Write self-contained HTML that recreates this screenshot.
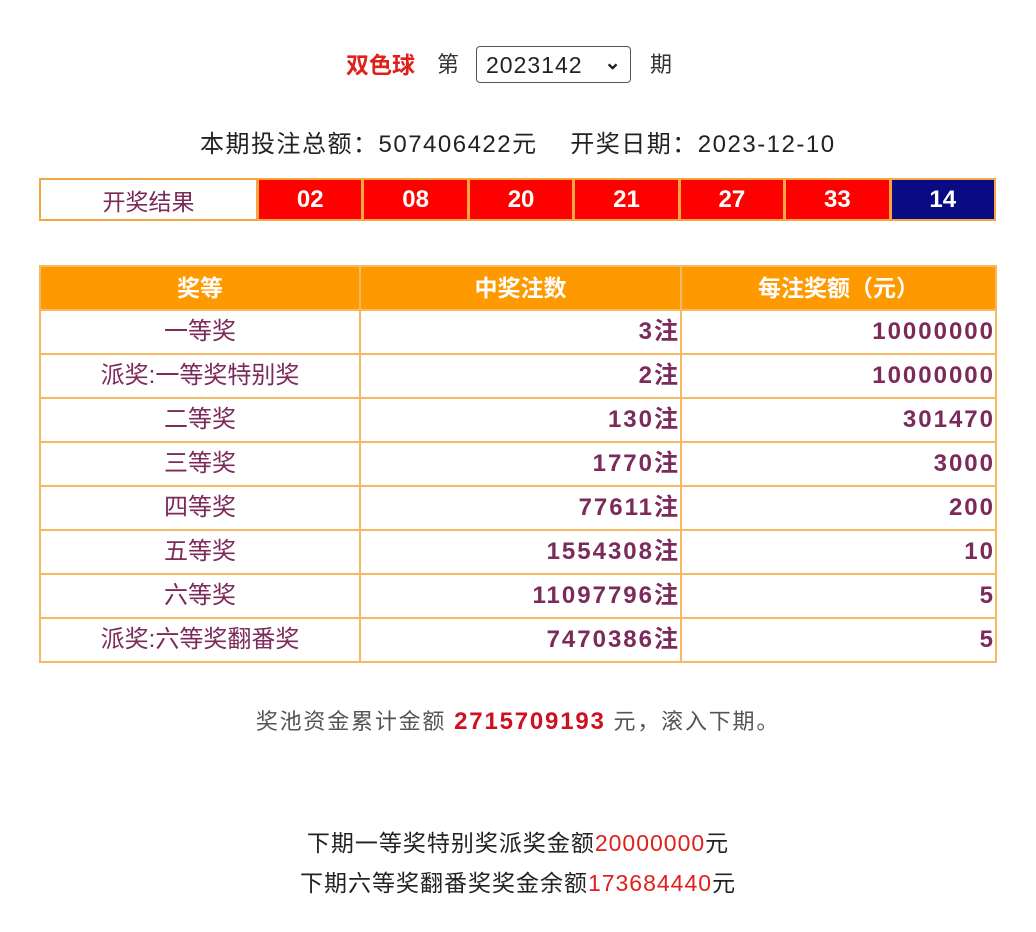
<!DOCTYPE html>
<html><head><meta charset="utf-8"><style>
body{margin:0;width:1036px;height:932px;background:#fff;font-family:"Liberation Sans","Noto Sans CJK SC",sans-serif;position:relative;overflow:hidden}
.a{position:absolute}
.sel{left:476px;top:46px;width:155px;height:37px;border:1px solid #555;border-radius:4px;font-size:23px;line-height:37px;box-sizing:border-box;padding-left:9px;color:#222;letter-spacing:1px}
.res{left:39px;top:178px;width:957px;height:43px;border:2px solid #f4a640;box-sizing:border-box;display:flex;background:#f4a640;gap:3px}
.res div{height:100%;background:#f00;color:#fff;font-weight:bold;font-size:24px;display:flex;align-items:center;justify-content:center;flex:1}
table{position:absolute;left:39px;top:265px;width:958px;border-collapse:collapse}
td,th{border:2px solid #f6b860;height:42px;font-size:23px;color:#7b2a5a;padding:0 2px;vertical-align:middle;line-height:30px}
th{background:#ff9900;color:#fff;font-weight:bold;height:42px}
td.c{text-align:center;font-size:24px}
td.r{text-align:right;font-weight:bold;font-size:24px;letter-spacing:2px;padding-right:0}
</style></head><body>
<div class="a" style="left:346px;top:50px;font-size:23px;line-height:30px;color:#e0201c;font-weight:bold">双色球</div>
<div class="a" style="left:437px;top:50px;font-size:22px;line-height:30px;color:#333">第</div>
<div class="a sel">2023142<span style="position:absolute;right:8px;top:-2px;font-size:20px;font-weight:bold">⌄</span></div>
<div class="a" style="left:650px;top:50px;font-size:22px;line-height:30px;color:#333">期</div>
<div class="a" style="left:200px;top:130px;font-size:24px;letter-spacing:1.5px;line-height:30px;color:#222;white-space:pre">本期投注总额：507406422元    开奖日期：2023-12-10</div>
<div class="a res">
<div style="flex:0 0 215px;background:#fff;color:#7b2a5a;font-weight:normal;font-size:23px">开奖结果</div>
<div>02</div><div>08</div><div>20</div><div>21</div><div>27</div><div>33</div><div style="background:#0a0a85">14</div>
</div>
<table>
<tr><th style="width:314px">奖等</th><th style="width:315px">中奖注数</th><th>每注奖额（元）</th></tr>
<tr><td class="c">一等奖</td><td class="r">3注</td><td class="r">10000000</td></tr>
<tr><td class="c">派奖:一等奖特别奖</td><td class="r">2注</td><td class="r">10000000</td></tr>
<tr><td class="c">二等奖</td><td class="r">130注</td><td class="r">301470</td></tr>
<tr><td class="c">三等奖</td><td class="r">1770注</td><td class="r">3000</td></tr>
<tr><td class="c">四等奖</td><td class="r">77611注</td><td class="r">200</td></tr>
<tr><td class="c">五等奖</td><td class="r">1554308注</td><td class="r">10</td></tr>
<tr><td class="c">六等奖</td><td class="r">11097796注</td><td class="r">5</td></tr>
<tr><td class="c">派奖:六等奖翻番奖</td><td class="r">7470386注</td><td class="r">5</td></tr>
</table>
<div class="a" style="left:0;width:1036px;top:707px;text-align:center;font-size:22px;letter-spacing:1.8px;line-height:30px;color:#555">奖池资金累计金额 <b style="color:#d01020;font-size:24px">2715709193</b> 元，滚入下期。</div>
<div class="a" style="left:0;width:1036px;top:828px;text-align:center;font-size:23px;letter-spacing:1px;line-height:30px;color:#222">下期一等奖特别奖派奖金额<span style="color:#e0201c">20000000</span>元</div>
<div class="a" style="left:0;width:1036px;top:868px;text-align:center;font-size:23px;letter-spacing:1px;line-height:30px;color:#222">下期六等奖翻番奖奖金余额<span style="color:#e0201c">173684440</span>元</div>
</body></html>
